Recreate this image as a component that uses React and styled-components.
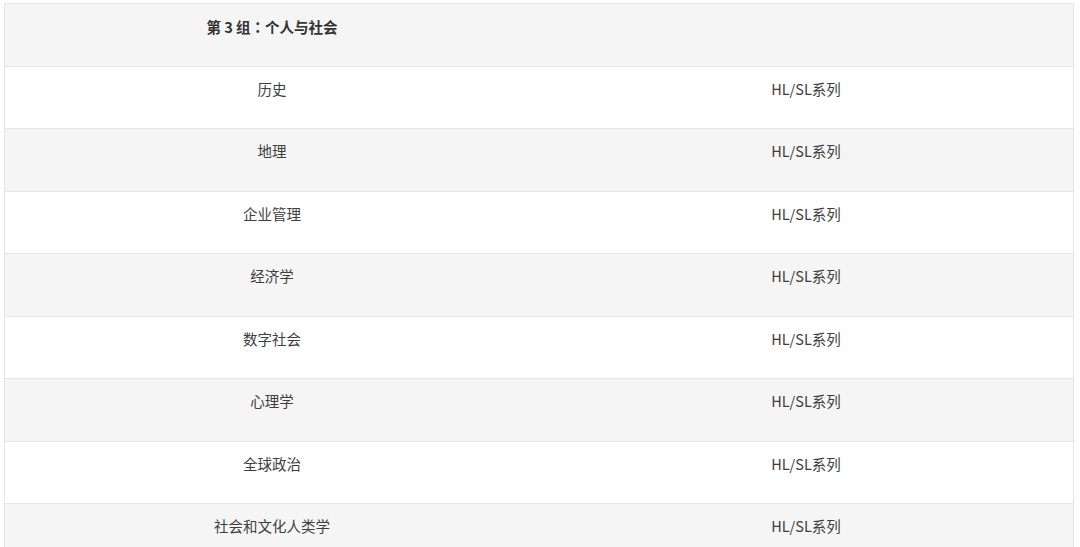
import React from 'react'
import styled, { createGlobalStyle } from 'styled-components';

const Global = createGlobalStyle`
    body {
        margin: 0;
        background: #fff;
        font-family: "Noto Sans CJK SC", "Noto Sans", sans-serif;
    }
`

const Page = styled.div`
    padding: 3px 6px 0 4px;
`

const Table = styled.div`
    border-left: 1px solid #e6e6e6;
    border-right: 1px solid #e6e6e6;
    border-top: 1px solid #e6e6e6;
`

const Row = styled.div`
    display: grid;
    grid-template-columns: 1fr 1fr;
    height: 61.5px;
    background: ${(props) => props.shade ? "#f5f5f5" : "#fff"};
    & + & {
        border-top: 1px solid #e6e6e6;
    }
`

const Cell = styled.div`
    text-align: center;
    padding-top: ${(props) => props.head ? "12px" : "11px"};
    font-size: 14.5px;
    line-height: 21px;
    color: ${(props) => props.head ? "#333" : "#3e3e3e"};
    font-weight: ${(props) => props.head ? 700 : 400};
`

// centred full-width colon, as in the heading
const Colon = styled.span`
    font-family: "Noto Sans CJK JP", sans-serif;
`

const subjects = [
    "历史",
    "地理",
    "企业管理",
    "经济学",
    "数字社会",
    "心理学",
    "全球政治",
    "社会和文化人类学",
]

const App = () => {
  return (
    <Page>
        <Global />
        <Table>
            <Row shade>
                <Cell head>第 3 组<Colon>：</Colon>个人与社会</Cell>
                <Cell head></Cell>
            </Row>
            {subjects.map((s, i) => (
                <Row key={s} shade={i % 2 === 1}>
                    <Cell>{s}</Cell>
                    <Cell>HL/SL系列</Cell>
                </Row>
            ))}
        </Table>
    </Page>
  )
}

export default App;
